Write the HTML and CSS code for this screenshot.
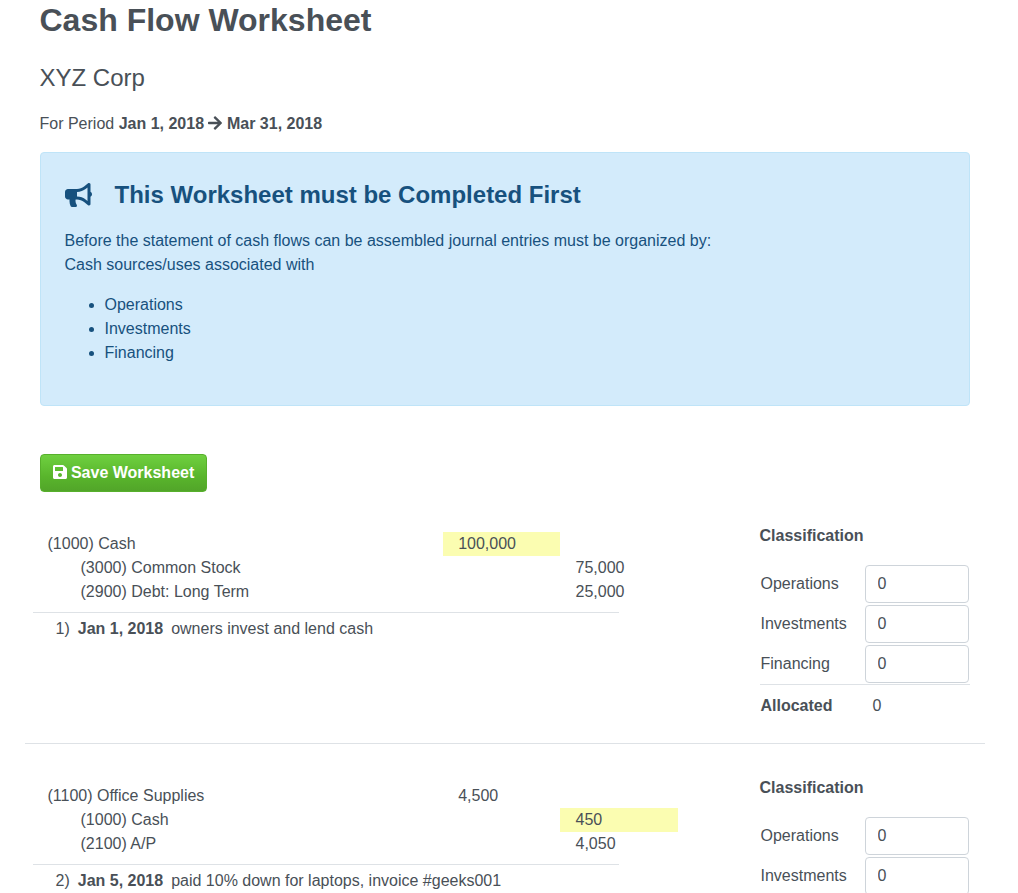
FILE: index.html
```html
<!DOCTYPE html>
<html lang="en">
<head>
<meta charset="utf-8">
<title>Cash Flow Worksheet</title>
<link rel="stylesheet" href="styles.css">
</head>
<body>
<main class="container">
  <header class="page-head">
    <h1 class="title">Cash Flow Worksheet</h1>
    <h2 class="company">XYZ Corp</h2>
    <p class="period">For Period <strong>Jan 1, 2018 <svg class="icon icon-arrow" viewBox="0 0 448 512" aria-hidden="true"><path d="M190.5 66.900l22.200-22.200c9.400-9.400 24.600-9.400 33.900 0L441 239c9.400 9.400 9.400 24.600 0 33.900L246.600 467.300c-9.400 9.400-24.600 9.400-33.900 0l-22.200-22.200c-9.500-9.500-9.300-25 .4-34.300L311.400 296H24c-13.300 0-24-10.700-24-24v-32c0-13.300 10.700-24 24-24h287.400L190.900 101.200c-9.800-9.300-10-24.800-.4-34.300z"/></svg> Mar 31, 2018</strong></p>
  </header>

  <section class="notice">
    <h3 class="notice-title">
      <svg class="icon icon-horn" viewBox="0 0 576 512" aria-hidden="true"><path d="M576 240c0-23.630-12.950-44.040-32-55.120V32.010C544 23.260 537.020 0 512 0c-7.120 0-14.190 2.380-19.980 7.020l-85.030 68.030C364.280 109.190 310.660 128 256 128H64c-35.350 0-64 28.650-64 64v96c0 35.350 28.650 64 64 64h33.700c-1.390 10.480-2.180 21.140-2.180 32 0 39.770 9.260 77.350 25.560 110.940 5.190 10.690 16.520 17.060 28.400 17.060h74.280c26.050 0 41.690-29.840 25.900-50.560-16.400-21.520-26.150-48.360-26.150-77.440 0-11.110 1.620-21.790 4.410-32H256c54.660 0 108.280 18.810 150.980 52.950l85.030 68.030a32.023 32.023 0 0 0 19.980 7.020c24.920 0 32-22.780 32-32V295.130C563.050 284.040 576 263.630 576 240zm-96 141.420l-33.050-26.440C392.950 311.780 325.120 288 256 288v-96c69.120 0 136.950-23.780 190.950-66.980L480 98.580v282.840z"/></svg>
      <span>This Worksheet must be Completed First</span>
    </h3>
    <p class="notice-text">Before the statement of cash flows can be assembled journal entries must be organized by:<br>Cash sources/uses associated with</p>
    <ul class="notice-list">
      <li>Operations</li>
      <li>Investments</li>
      <li>Financing</li>
    </ul>
  </section>

  <div class="actions">
    <button class="btn-save" type="button"><svg class="icon icon-save" viewBox="0 0 448 512" aria-hidden="true"><path d="M433.941 129.941l-83.882-83.882A48 48 0 0 0 316.118 32H48C21.490 32 0 53.490 0 80v352c0 26.510 21.490 48 48 48h352c26.510 0 48-21.490 48-48V163.882a48 48 0 0 0-14.059-33.941zM224 416c-35.346 0-64-28.654-64-64 0-35.346 28.654-64 64-64s64 28.654 64 64c0 35.346-28.654 64-64 64zm96-304.520V212c0 6.627-5.373 12-12 12H76c-6.627 0-12-5.373-12-12V108c0-6.627 5.373-12 12-12h228.520c3.183 0 6.235 1.264 8.485 3.515l3.480 3.480A11.996 11.996 0 0 1 320 111.480z"/></svg> Save Worksheet</button>
  </div>

  <section class="entry">
    <div class="journal">
      <table class="lines">
        <colgroup><col class="col-account"><col class="col-amount"><col class="col-amount"><col></colgroup>
        <tbody>
          <tr><td>(1000) Cash</td><td class="cash">100,000</td><td></td><td></td></tr>
          <tr><td class="credit">(3000) Common Stock</td><td></td><td>75,000</td><td></td></tr>
          <tr><td class="credit">(2900) Debt: Long Term</td><td></td><td>25,000</td><td></td></tr>
        </tbody>
      </table>
      <p class="memo"><span>1)</span><strong>Jan 1, 2018</strong><span>owners invest and lend cash</span></p>
    </div>
    <div class="classification">
      <h4 class="class-title">Classification</h4>
      <table class="alloc">
        <tbody>
          <tr><th scope="row"><label for="op1">Operations</label></th><td><input class="field" id="op1" type="text" value="0"></td></tr>
          <tr><th scope="row"><label for="inv1">Investments</label></th><td><input class="field" id="inv1" type="text" value="0"></td></tr>
          <tr><th scope="row"><label for="fin1">Financing</label></th><td><input class="field" id="fin1" type="text" value="0"></td></tr>
        </tbody>
        <tfoot><tr><th scope="row">Allocated</th><td>0</td></tr></tfoot>
      </table>
    </div>
  </section>

  <section class="entry">
    <div class="journal">
      <table class="lines">
        <colgroup><col class="col-account"><col class="col-amount"><col class="col-amount"><col></colgroup>
        <tbody>
          <tr><td>(1100) Office Supplies</td><td>4,500</td><td></td><td></td></tr>
          <tr><td class="credit">(1000) Cash</td><td></td><td class="cash">450</td><td></td></tr>
          <tr><td class="credit">(2100) A/P</td><td></td><td>4,050</td><td></td></tr>
        </tbody>
      </table>
      <p class="memo"><span>2)</span><strong>Jan 5, 2018</strong><span>paid 10% down for laptops, invoice #geeks001</span></p>
    </div>
    <div class="classification">
      <h4 class="class-title">Classification</h4>
      <table class="alloc">
        <tbody>
          <tr><th scope="row"><label for="op2">Operations</label></th><td><input class="field" id="op2" type="text" value="0"></td></tr>
          <tr><th scope="row"><label for="inv2">Investments</label></th><td><input class="field" id="inv2" type="text" value="0"></td></tr>
        </tbody>
      </table>
    </div>
  </section>
</main>
</body>
</html>
```
FILE: styles.css
```css
* {
  box-sizing: border-box;
}

body {
  margin: 0 9px 0 0;
  background: #fff;
  color: #495057;
  font: 16px/24px "Liberation Sans", Arial, sans-serif;
}

h1, h2, h3, h4, p, ul {
  margin: 0;
}

table {
  width: 100%;
  border-collapse: collapse;
}

th, td {
  padding: 0;
  text-align: left;
}

.icon {
  fill: currentColor;
}

.container {
  max-width: 960px;
  margin: 0 auto;
}

.page-head {
  padding: 1px 15px 16px;
}

.title {
  margin-bottom: 24px;
  font-size: 32px;
  line-height: 38px;
}

.company {
  margin-bottom: 20px;
  font-size: 24px;
  font-weight: 400;
  line-height: 29px;
}

.icon-arrow,
.icon-save {
  width: 14px;
  height: 16px;
  vertical-align: -2px;
}

/* Notice */
.notice {
  margin: 0 15px 48px;
  padding: 24px;
  border: 1px solid #bfe4f8;
  border-radius: 4px;
  background: #d3ebfb;
  color: #17517e;
}

.notice-title {
  display: flex;
  align-items: center;
  gap: 23px;
  margin-bottom: 16px;
  font-size: 24px;
  line-height: 36px;
}

.icon-horn {
  width: 27px;
  height: 24px;
}

.notice-text {
  margin-bottom: 16px;
}

.notice-list {
  margin-bottom: 16px;
  padding-left: 40px;
}

/* Save button */
.actions {
  display: flex;
  padding: 0 15px;
}

.btn-save {
  padding: 6px 12px;
  border: 1px solid #57b02c;
  border-radius: 4px;
  background: linear-gradient(#6fd040, #59b52c 60%, #52a529);
  color: #fff;
  font: inherit;
  font-weight: 700;
}

/* Journal entries */
.entry {
  display: grid;
  grid-template-columns: 3fr 1fr;
  padding: 32px 0 16px;
  border-bottom: 1px solid #dee2e6;
}

.entry:last-child {
  border-bottom: 0;
  padding-bottom: 0;
}

.journal {
  padding: 8px 8px 0;
}

.lines {
  margin-bottom: 8px;
  table-layout: fixed;
}

.lines td {
  height: 24px;
  padding: 0 15px;
}

.lines .credit {
  padding-left: 48px;
}

.lines .cash {
  background: #fbfdb1;
}

.col-account {
  width: 58.333%;
}

.col-amount {
  width: 16.667%;
}

.memo {
  display: flex;
  gap: 8px;
  width: 83.333%;
  padding: 4px 23px 0;
  border-top: 1px solid #dee2e6;
}

/* Classification */
.classification {
  padding: 0 15px;
}

.class-title {
  margin-bottom: 16px;
  font-size: 16px;
}

.alloc {
  border-collapse: separate;
  border-spacing: 0;
  table-layout: fixed;
}

.alloc th,
.alloc td {
  padding: 1px;
}

.alloc th {
  width: 104px;
}

.alloc tbody th {
  font-weight: 400;
}

.alloc tfoot th,
.alloc tfoot td {
  padding: 9px 1px;
  border-top: 1px solid #dee2e6;
}

.alloc tfoot td {
  padding-left: 9px;
}

.field {
  display: block;
  width: 100%;
  height: 38px;
  padding: 6px 12px;
  border: 1px solid #ced4da;
  border-radius: 4px;
  background: #fff;
  color: #495057;
  font: inherit;
}
```
